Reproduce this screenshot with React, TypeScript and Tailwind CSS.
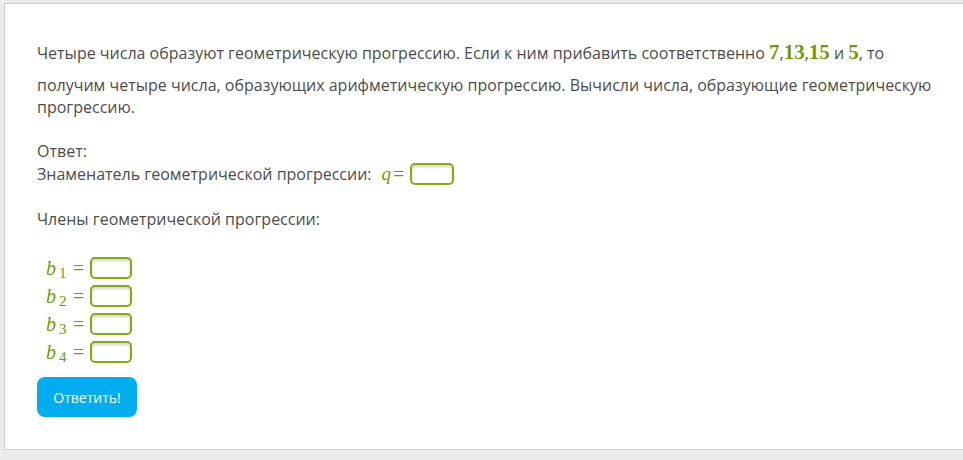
import React from "react"

const green = "text-[#6f9c00]"

function Num({ children }: { children: React.ReactNode }) {
  return (
    <span className={`${green} font-['Liberation_Serif',serif] text-[21px] font-bold leading-[44px]`}>
      {children}
    </span>
  )
}

function AnswerBox({ w = "w-[42px]" }: { w?: string }) {
  return (
    <span className={`inline-block ${w} h-[22px] rounded-[5px] border-2 border-[#83ad0f] bg-white shadow-[inset_0_2px_3px_rgba(0,0,0,0.18)] align-middle`} />
  )
}

function Member({ i }: { i: number }) {
  return (
    <div className="flex items-center h-[28px]">
      <span className={`${green} font-['Liberation_Serif',serif] italic text-[20px] w-[13px]`}>b</span>
      <span className={`${green} font-['Liberation_Serif',serif] text-[15px] mt-[10px] w-[14px]`}>{i}</span>
      <span className={`${green} font-['Liberation_Serif',serif] text-[20px] mr-[6px]`}>=</span>
      <AnswerBox />
    </div>
  )
}

export default function App() {
  return (
    <div className="w-[963px] h-[460px] bg-[#ebebeb] pt-[3px] pl-[4px] overflow-hidden font-['Open_Sans',sans-serif] text-[#4d4d4d]">
      <div className="h-[447px] bg-white border-l border-t border-b border-[#cccccc] pl-[32px] pt-[26px]">
        <p className="text-[16px] leading-[22px] w-[905px]">
          Четыре числа образуют геометрическую прогрессию. Если к ним прибавить соответственно{" "}
          <Num>7</Num><span>,</span><Num>13</Num><span>,</span><Num>15</Num> и <Num>5</Num>, то получим четыре числа,
          образующих арифметическую прогрессию. Вычисли числа, образующие геометрическую прогрессию.
        </p>

        <div className="mt-[22px] text-[16px] leading-[22px]">
          <div>Ответ:</div>
          <div className="flex items-center h-[24px]">
            <span>Знаменатель геометрической прогрессии:</span>
            <span className={`${green} font-['Liberation_Serif',serif] italic text-[19px] ml-[10px]`}>q</span>
            <span className={`${green} font-['Liberation_Serif',serif] text-[20px] ml-[2px] mr-[6px]`}>=</span>
            <AnswerBox w="w-[44px]" />
          </div>
          <div className="mt-[22px]">Члены геометрической прогрессии:</div>
        </div>

        <div className="mt-[24px] ml-[9px] flex flex-col">
          <Member i={1} />
          <Member i={2} />
          <Member i={3} />
          <Member i={4} />
        </div>

        <button className="mt-[11px] w-[100px] h-[40px] rounded-[8px] bg-[#00aeef] text-white text-[14px] font-['Open_Sans',sans-serif]">
          Ответить!
        </button>
      </div>
    </div>
  )
}
